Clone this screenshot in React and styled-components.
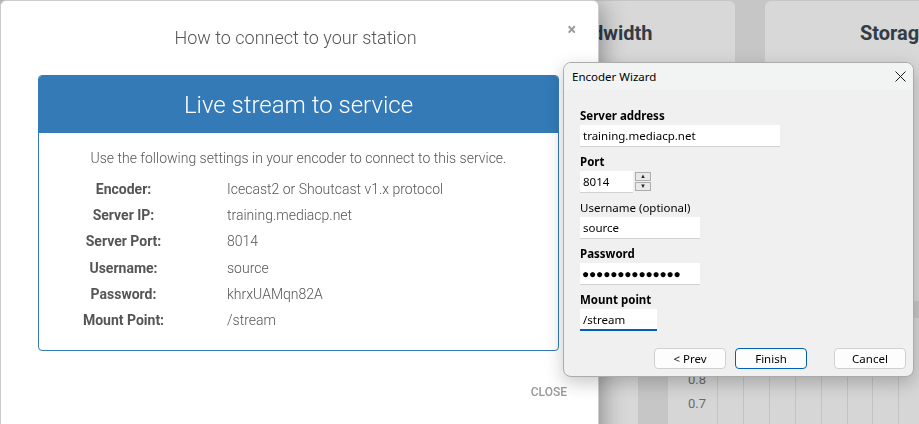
import styled, { createGlobalStyle } from "styled-components";

const GlobalStyle = createGlobalStyle`
  html, body {
    margin: 0;
    padding: 0;
  }
  body {
    width: 919px;
    height: 424px;
    overflow: hidden;
    background: #c6c6c6;
    font-family: Roboto, "Noto Sans", sans-serif;
  }
`;

const rows = [
  ["Encoder:", "Icecast2 or Shoutcast v1.x protocol"],
  ["Server IP:", "training.mediacp.net"],
  ["Server Port:", "8014"],
  ["Username:", "source"],
  ["Password:", "khrxUAMqn82A"],
  ["Mount Point:", "/stream"],
];

const axisLabels = ["0.8", "0.7"];

const App = () => {
  return (
    <>
      <GlobalStyle />
      <Dashboard>
        <CardRow>
          <Card />
          <Card>
            <CardTitle $shift={10}>Bandwidth</CardTitle>
          </Card>
          <Card>
            <CardTitle $shift={-10}>Storage</CardTitle>
          </Card>
        </CardRow>
        <ChartRow>
          <Card />
          <ChartCard>
            <Axis>
              {axisLabels.map((l) => (
                <span key={l}>{l}</span>
              ))}
            </Axis>
            <Plot />
          </ChartCard>
        </ChartRow>
      </Dashboard>

      <Modal>
        <ModalHeader>
          <ModalTitle>How to connect to your station</ModalTitle>
          <Dismiss>×</Dismiss>
        </ModalHeader>
        <Panel>
          <PanelHeading>Live stream to service</PanelHeading>
          <PanelBody>
            <Intro>Use the following settings in your encoder to connect to this service.</Intro>
            <SettingsList>
              {rows.map(([label, value]) => (
                <Setting key={label}>
                  <SettingLabel>{label}</SettingLabel>
                  <SettingValue>{value}</SettingValue>
                </Setting>
              ))}
            </SettingsList>
          </PanelBody>
        </Panel>
        <ModalFooter>
          <FooterButton>Close</FooterButton>
        </ModalFooter>
      </Modal>

      <Wizard>
        <TitleBar>
          <span>Encoder Wizard</span>
          <svg width="11" height="11" viewBox="0 0 11 11">
            <path d="M0.5 0.5 L10.5 10.5 M10.5 0.5 L0.5 10.5" stroke="#1b1b1b" strokeWidth="1" />
          </svg>
        </TitleBar>
        <WizardBody>
          <FieldGroup>
            <FieldLabel $bold>Server address</FieldLabel>
            <Field $width={200}>training.mediacp.net</Field>
          </FieldGroup>
          <FieldGroup>
            <FieldLabel $bold>Port</FieldLabel>
            <PortRow>
              <Field $width={53}>8014</Field>
              <Spinner>
                <SpinButton>▲</SpinButton>
                <SpinButton>▼</SpinButton>
              </Spinner>
            </PortRow>
          </FieldGroup>
          <FieldGroup>
            <FieldLabel>Username (optional)</FieldLabel>
            <Field $width={120}>source</Field>
          </FieldGroup>
          <FieldGroup>
            <FieldLabel $bold>Password</FieldLabel>
            <Field $width={120} $dots>●●●●●●●●●●●●●●</Field>
          </FieldGroup>
          <FieldGroup>
            <FieldLabel $bold>Mount point</FieldLabel>
            <Field $width={77} $focused>/stream</Field>
          </FieldGroup>
          <ButtonRow>
            <WizButton>&lt; Prev</WizButton>
            <WizButton $primary>Finish</WizButton>
            <WizButton $spaced>Cancel</WizButton>
          </ButtonRow>
        </WizardBody>
      </Wizard>
    </>
  );
};

export default App;

const Dashboard = styled.div`
  width: 919px;
  height: 424px;
  overflow: hidden;
  padding: 1px 0 0 165px;
  box-sizing: border-box;
  display: flex;
  flex-direction: column;
  gap: 17px;
`;

const CardRow = styled.div`
  display: grid;
  grid-template-columns: repeat(3, 270px);
  gap: 30px;
`;

const Card = styled.div`
  height: 300px;
  background: #d8d8d8;
  border-radius: 6px;
`;

const CardTitle = styled.h3`
  margin: 0;
  padding-top: 20px;
  padding-left: ${(p) => Math.max(p.$shift, 0)}px;
  padding-right: ${(p) => Math.max(-p.$shift, 0)}px;
  text-align: center;
  font-size: 20px;
  font-weight: 700;
  color: #323c47;
  line-height: 24px;
`;

const ChartRow = styled.div`
  display: grid;
  grid-template-columns: 473px 400px;
  gap: 30px;

  & > div {
    height: 200px;
  }
`;

const ChartCard = styled.div`
  background: #d6d6d6;
  display: flex;
`;

const Axis = styled.div`
  width: 49px;
  box-sizing: border-box;
  padding: 50px 11px 0 0;
  display: flex;
  flex-direction: column;
  align-items: flex-end;
  font-size: 13px;
  line-height: 24px;
  color: #6b6b6b;
`;

const Plot = styled.div`
  flex: 1;
  background: repeating-linear-gradient(
    to right,
    #c3c3c3 0 1px,
    transparent 1px 25.9px
  );
`;

const Modal = styled.div`
  position: fixed;
  top: 0;
  left: 0;
  width: 599px;
  height: 460px;
  box-sizing: border-box;
  background: #fff;
  border: 1px solid rgba(0, 0, 0, 0.2);
  border-radius: 6px;
  box-shadow: 0 5px 28px rgba(0, 0, 0, 0.45);
  padding: 0 39px 0 37px;
  display: flex;
  flex-direction: column;
`;

const ModalHeader = styled.div`
  height: 74px;
  display: flex;
  align-items: center;
  justify-content: center;
  padding: 0 6px 2px 0;
  box-sizing: border-box;
`;

const ModalTitle = styled.h4`
  margin: 0;
  font-size: 18px;
  font-weight: 300;
  color: #555;
`;

const Dismiss = styled.span`
  position: absolute;
  top: 19px;
  right: 22px;
  font-size: 16px;
  font-weight: 700;
  color: #999;
  line-height: 20px;
`;

const Panel = styled.div`
  border: 1px solid #337ab7;
  border-radius: 4px;
  overflow: hidden;
`;

const PanelHeading = styled.div`
  height: 57px;
  background: #337ab7;
  color: #fff;
  display: flex;
  align-items: center;
  justify-content: center;
  font-size: 24px;
  font-weight: 300;
`;

const PanelBody = styled.div`
  padding: 15px 0 17px;
`;

const Intro = styled.p`
  margin: 0;
  text-align: center;
  font-size: 14px;
  font-weight: 300;
  line-height: 20px;
  color: #555;
`;

const SettingsList = styled.div`
  margin-top: 8px;
  display: flex;
  flex-direction: column;
`;

const Setting = styled.div`
  display: grid;
  grid-template-columns: 169px 1fr;
  column-gap: 19px;
  height: 26.2px;
  line-height: 26px;
  font-size: 14px;
  color: #555;
`;

const SettingLabel = styled.span`
  text-align: center;
  font-weight: 700;
`;

const SettingValue = styled.span`
  font-weight: 300;
`;

const ModalFooter = styled.div`
  display: flex;
  justify-content: flex-end;
  margin-top: 31px;
  margin-right: -8px;
`;

const FooterButton = styled.span`
  font-size: 12px;
  font-weight: 500;
  text-transform: uppercase;
  color: #999;
  line-height: 20px;
`;

const Wizard = styled.div`
  position: fixed;
  left: 563px;
  top: 62px;
  width: 351px;
  height: 315px;
  box-sizing: border-box;
  background: #f0f0f0;
  border: 1px solid #ababab;
  border-radius: 8px;
  box-shadow: 0 6px 18px rgba(0, 0, 0, 0.22);
  overflow: hidden;
  font-family: "Noto Sans", "Open Sans", sans-serif;
  font-size: 11.5px;
  color: #000;
  display: flex;
  flex-direction: column;
`;

const TitleBar = styled.div`
  height: 27px;
  flex-shrink: 0;
  display: flex;
  align-items: center;
  justify-content: space-between;
  padding: 0 7px 0 8px;
  background: #f2f4f4;
`;

const WizardBody = styled.div`
  flex: 1;
  display: flex;
  flex-direction: column;
  padding: 18px 7px 7px 16px;
`;

const FieldGroup = styled.div`
  display: flex;
  flex-direction: column;
  align-items: flex-start;
  margin-bottom: 7px;
`;

const FieldLabel = styled.div`
  line-height: 16px;
  margin-bottom: 1px;
  font-weight: ${(p) => (p.$bold ? 700 : 400)};
`;

const Field = styled.div`
  width: ${(p) => p.$width}px;
  height: 22px;
  box-sizing: border-box;
  background: #fff;
  border-bottom: ${(p) => (p.$focused ? "2px solid #005fb8" : "1px solid #d2d2d2")};
  padding: 0 ${(p) => (p.$dots ? "2px" : "3px")};
  line-height: 21px;
  font-size: ${(p) => (p.$dots ? "12px" : "inherit")};
  letter-spacing: ${(p) => (p.$dots ? "-0.2px" : "normal")};
  white-space: nowrap;
  overflow: hidden;
`;

const PortRow = styled.div`
  display: flex;
  align-items: flex-start;
  gap: 2px;
`;

const Spinner = styled.div`
  display: flex;
  flex-direction: column;
  gap: 1px;
  padding-top: 1px;
`;

const SpinButton = styled.div`
  width: 16px;
  height: 9px;
  box-sizing: border-box;
  border: 1px solid #adadad;
  background: #e9e9e9;
  font-size: 6px;
  line-height: 7px;
  text-align: center;
  color: #222;
`;

const ButtonRow = styled.div`
  margin-top: auto;
  display: flex;
  justify-content: flex-end;
  gap: 9px;
`;

const WizButton = styled.div`
  width: 72px;
  height: 21px;
  box-sizing: border-box;
  border: 1px solid ${(p) => (p.$primary ? "#005fb8" : "#d0d0d0")};
  border-radius: 4px;
  background: #fdfdfd;
  display: flex;
  align-items: center;
  justify-content: center;
  margin-left: ${(p) => (p.$spaced ? "18px" : "0")};
`;
